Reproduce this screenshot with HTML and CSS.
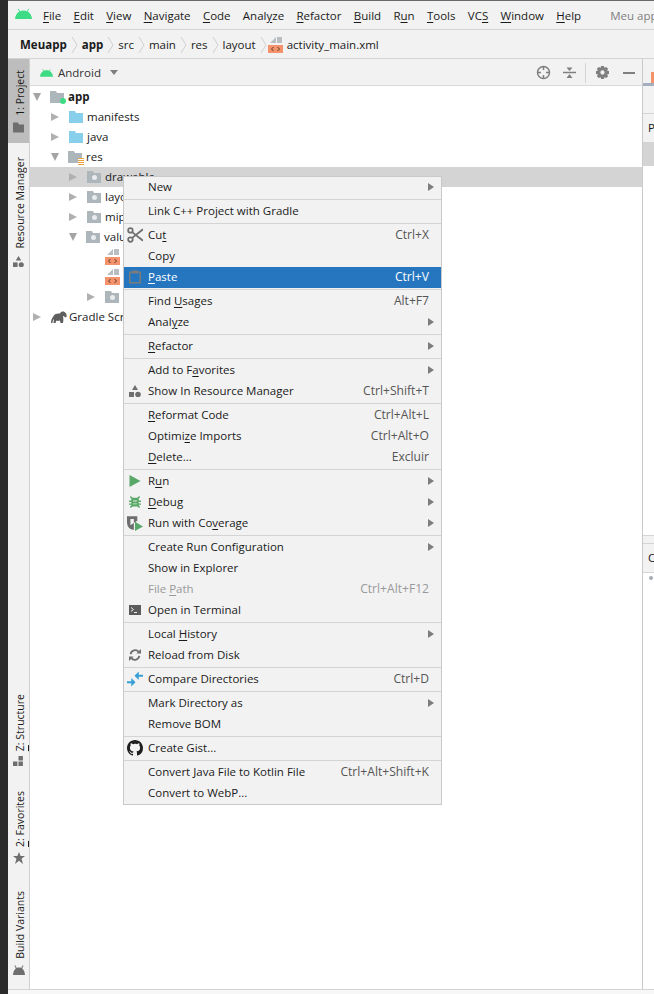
FILE: index.html
```html
<!DOCTYPE html>
<html lang="en">
<head>
<meta charset="utf-8">
<title>Meu app</title>
<link rel="stylesheet" href="styles.css">
</head>
<body>
<svg class="defs" width="0" height="0">
  <defs>
    <symbol id="android" viewBox="0 0 17 11"><path d="M0 11C.3 7.6 2 5 4.3 3.6L2.9 1.2 3.6.8 5 3.2C6.1 2.7 7.2 2.5 8.5 2.5s2.4.2 3.5.7L13.4.8l.7.4-1.4 2.4C15 5 16.700 7.600 17 11Z"/></symbol>
    <symbol id="folder" viewBox="0 0 14 12"><path d="M0 0H6L7 2H14V12H0Z"/></symbol>
    <symbol id="chev" viewBox="0 0 7 18"><path d="M1 1 6 9 1 17" fill="none" stroke="#d0d0d0"/></symbol>
    <symbol id="xml" viewBox="0 0 15 16"><path d="M8 0V6H2Z M9 0H14V6H9Z" fill="#b9bec2"/><rect y="8" width="15" height="8" fill="#f4936b"/><path d="M5.500 10 3.500 12 5.500 14M9.500 10 11.500 12 9.500 14" fill="none" stroke="#5a3a2c"/></symbol>
    <symbol id="shapes" viewBox="0 0 12 12"><path d="M6 0 9 5H3Z"/><rect y="7" width="5" height="5"/><circle cx="9" cy="9.500" r="2.800"/></symbol>
  </defs>
</svg>
<div class="app">
  <div class="desktop-edge"></div>
  <div class="ide">
    <header class="menubar">
      <svg class="logo"><use href="#android"/></svg>
      <nav class="menus">
        <span class="m"><u>F</u>ile</span><span class="m"><u>E</u>dit</span><span class="m"><u>V</u>iew</span><span class="m"><u>N</u>avigate</span><span class="m"><u>C</u>ode</span><span class="m">Anal<u>y</u>ze</span><span class="m"><u>R</u>efactor</span><span class="m"><u>B</u>uild</span><span class="m">R<u>u</u>n</span><span class="m"><u>T</u>ools</span><span class="m">VC<u>S</u></span><span class="m"><u>W</u>indow</span><span class="m"><u>H</u>elp</span>
      </nav>
      <span class="wintitle">Meu app</span>
    </header>
    <div class="crumbs">
      <b>Meuapp</b><svg class="chev"><use href="#chev"/></svg>
      <b>app</b><svg class="chev"><use href="#chev"/></svg>
      <span>src</span><svg class="chev"><use href="#chev"/></svg>
      <span>main</span><svg class="chev"><use href="#chev"/></svg>
      <span>res</span><svg class="chev"><use href="#chev"/></svg>
      <span>layout</span><svg class="chev"><use href="#chev"/></svg>
      <svg class="xml crumb-xml"><use href="#xml"/></svg><span>activity_main.xml</span>
    </div>
    <div class="workspace">
      <aside class="sidebar">
        <div class="st-top">
          <div class="st active"><span class="vt">1: Project</span><svg class="st-ico" viewBox="0 0 11 10"><path d="M0 0H5L6 2H11V10H0Z"/></svg></div>
          <div class="st res-tab"><span class="vt">Resource Manager</span><svg class="st-ico"><use href="#shapes"/></svg></div>
        </div>
        <div class="st-bottom">
          <div class="st"><span class="vt"><u>Z</u>: Structure</span><svg class="st-ico" viewBox="0 0 10 10"><path d="M0 5H4V9H0ZM5 0H9V4H5ZM5 5H9V9H5Z"/></svg></div>
          <div class="st"><span class="vt"><u>2</u>: Favorites</span><svg class="st-ico star" viewBox="0 0 12 12"><path d="M6 0 7.600 4H12L8.500 6.800 10 12 6 8.800 2 12 3.500 6.800 0 4H4.400Z"/></svg></div>
          <div class="st"><span class="vt">Build Variants</span><svg class="st-ico star" viewBox="0 0 12 10"><path d="M0 10C.2 7 1 5 2.800 3.500L1.500.5 2.200.2 3.800 3C4.500 2.600 5.200 2.500 6 2.500s1.500.1 2.200.5L9.800.2l.7.3-1.300 3C11 5 11.800 7 12 10Z"/></svg></div>
        </div>
      </aside>
      <main class="project">
        <div class="toolhead">
          <svg class="tool-android"><use href="#android"/></svg>
          <span class="tool-title">Android</span>
          <i class="drop"></i>
          <div class="tool-actions">
            <svg class="ta" viewBox="0 0 15 15"><circle cx="7.500" cy="7.500" r="6" fill="none" stroke="#7f7f7f" stroke-width="1.500"/><path d="M7.500 1V5M7.500 10V14M1 7.500H5M10 7.500H14" stroke="#7f7f7f" stroke-width="1.500"/></svg>
            <svg class="ta" viewBox="0 0 13 13"><path d="M0 6.500H13" stroke="#7f7f7f" stroke-width="1.500"/><path d="M6.500 5 3.500 1.500H9.500ZM6.500 8 3.500 12H9.500Z" fill="#7f7f7f"/></svg>
            <i class="ta-sep"></i>
            <svg class="ta gear" viewBox="0 0 14 14"><path fill="#7f7f7f" fill-rule="evenodd" d="M5.500 0H8.500L9 2 11 1 13 3 12 5 14 5.500V8.500L12 9 13 11 11 13 9 12 8.500 14H5.500L5 12 3 13 1 11 2 9 0 8.500V5.500L2 5 1 3 3 1 5 2ZM7 4.700A2.300 2.300 0 1 0 7 9.300 2.300 2.300 0 1 0 7 4.700Z"/></svg>
            <i class="minimize"></i>
          </div>
        </div>
        <div class="tree">
          <div class="row l0 bold"><i class="arr down"></i><span class="fico"><svg class="fold grey"><use href="#folder"/></svg><i class="dot"></i></span><span>app</span></div>
          <div class="row l1"><i class="arr"></i><svg class="fold blue"><use href="#folder"/></svg><span>manifests</span></div>
          <div class="row l1"><i class="arr"></i><svg class="fold blue"><use href="#folder"/></svg><span>java</span></div>
          <div class="row l1"><i class="arr down"></i><span class="fico"><svg class="fold grey"><use href="#folder"/></svg><i class="lines"></i></span><span>res</span></div>
          <div class="row l2 selected"><i class="arr"></i><span class="fico"><svg class="fold grey"><use href="#folder"/></svg><i class="hole"></i></span><span>drawable</span></div>
          <div class="row l2"><i class="arr"></i><span class="fico"><svg class="fold grey"><use href="#folder"/></svg><i class="hole"></i></span><span>layout</span></div>
          <div class="row l2"><i class="arr"></i><span class="fico"><svg class="fold grey"><use href="#folder"/></svg><i class="hole"></i></span><span>mipmap</span></div>
          <div class="row l2"><i class="arr down"></i><span class="fico"><svg class="fold grey"><use href="#folder"/></svg><i class="hole"></i></span><span>values</span></div>
          <div class="row l3"><svg class="xml"><use href="#xml"/></svg><span>colors.xml</span></div>
          <div class="row l3"><svg class="xml"><use href="#xml"/></svg><span>styles.xml</span></div>
          <div class="row l3b"><i class="arr"></i><span class="fico"><svg class="fold grey"><use href="#folder"/></svg><i class="hole"></i></span><span>xml</span></div>
          <div class="row l0"><i class="arr"></i><svg class="gradle" viewBox="0 0 16 12"><path d="M0 12C0 9 1 7 2 6 3 3 6 2 9 2.500 10 .5 12 0 13.500 1 15.500 2 16 4 15.500 6L14 6.500C13.500 5.500 13 5 12 5 12.500 7 12.500 9 12 12H9.500L9 9.500C7.500 10 6.500 10 5.500 9.500L4.500 12H2.500L3 8C2 9 1.500 10 1.500 12Z" fill="#5e5e5e"/></svg><span>Gradle Scripts</span></div>
        </div>
      </main>
      <aside class="rightpanel">
        <div class="rp-tab"><i class="rp-mark"></i></div>
        <div class="rp-band"></div>
        <div class="rp-head">P</div>
        <div class="rp-selected"></div>
        <div class="rp-blank"></div>
        <div class="rp-thin"></div>
        <div class="rp-head2">C</div>
        <div class="rp-list"><i class="rp-dot"></i></div>
      </aside>
    </div>
    <footer class="statusbar"></footer>
  </div>
</div>

<div class="ctx">
  <div class="it sub"><span class="lbl">New</span></div>
  <hr>
  <div class="it"><span class="lbl">Link C++ Project with Gradle</span></div>
  <hr>
  <div class="it"><svg class="ic ic-lg" viewBox="0 0 14 14"><g fill="none" stroke="#6e6e6e" stroke-width="1.500"><circle cx="3" cy="3" r="2"/><circle cx="3" cy="11" r="2"/><path d="M4.500 4.500 14 12M4.500 9.500 14 2"/></g></svg><span class="lbl">Cu<u>t</u></span><span class="sc">Ctrl+X</span></div>
  <div class="it"><span class="lbl">Copy</span></div>
  <div class="it hl"><svg class="ic ic-tall" viewBox="0 0 12 14"><path d="M.8 2.800H11.200V13.200H.8Z" fill="none" stroke="#7c7c7c" stroke-width="1.500"/><rect x="3" y="1" width="6" height="3" fill="#7c7c7c"/></svg><span class="lbl"><u>P</u>aste</span><span class="sc">Ctrl+V</span></div>
  <hr>
  <div class="it"><span class="lbl">Find <u>U</u>sages</span><span class="sc">Alt+F7</span></div>
  <div class="it sub"><span class="lbl">Anal<u>y</u>ze</span></div>
  <hr>
  <div class="it sub"><span class="lbl"><u>R</u>efactor</span></div>
  <hr>
  <div class="it sub"><span class="lbl">Add to F<u>a</u>vorites</span></div>
  <div class="it"><svg class="ic" viewBox="0 0 12 12"><use href="#shapes"/></svg><span class="lbl">Show In Resource Manager</span><span class="sc">Ctrl+Shift+T</span></div>
  <hr>
  <div class="it"><span class="lbl"><u>R</u>eformat Code</span><span class="sc">Ctrl+Alt+L</span></div>
  <div class="it"><span class="lbl">Optimi<u>z</u>e Imports</span><span class="sc">Ctrl+Alt+O</span></div>
  <div class="it"><span class="lbl"><u>D</u>elete...</span><span class="sc">Excluir</span></div>
  <hr>
  <div class="it sub"><svg class="ic" viewBox="0 0 11 12"><path d="M0 0 11 6 0 12Z" fill="#59a869"/></svg><span class="lbl">R<u>u</u>n</span></div>
  <div class="it sub"><svg class="ic" viewBox="0 0 13 13"><path d="M2 0 4 2H9L11 0 12 1 10.500 3V5H13V6.500H10.500V8H13V9.500H10.500V10L12 12 11 13 9 11.500H4L2 13 1 12 2.500 10V9.500H0V8H2.500V6.500H0V5H2.500V3L1 1Z" fill="#59a869"/><path d="M4.500 5H8.500V6H4.500ZM4.500 8H8.500V9H4.500Z" fill="#e8f2ea"/></svg><span class="lbl"><u>D</u>ebug</span></div>
  <div class="it sub"><svg class="ic ic-lg" viewBox="0 0 14 14"><path d="M0 1H9V5L6 7V13C3 13 0 11 0 6Z" fill="#6e6e6e"/><path d="M3 3.500H6V7L3 9Z" fill="#f2f2f2"/><path d="M7 6 14 10 7 14Z" fill="#59a869"/></svg><span class="lbl">Run with Co<u>v</u>erage</span></div>
  <hr>
  <div class="it sub"><span class="lbl">Create Run Configuration</span></div>
  <div class="it"><span class="lbl">Show in Explorer</span></div>
  <div class="it dis"><span class="lbl">File <u>P</u>ath</span><span class="sc">Ctrl+Alt+F12</span></div>
  <div class="it"><svg class="ic" viewBox="0 0 12 10"><rect width="12" height="10" fill="#5c5c5c"/><path d="M2 2.500 4.500 4.500 2 6.500M5 7.500H8" fill="none" stroke="#eee"/></svg><span class="lbl">Open in Terminal</span></div>
  <hr>
  <div class="it sub"><span class="lbl">Local <u>H</u>istory</span></div>
  <div class="it"><svg class="ic" viewBox="0 0 13 13"><path d="M1.800 5.500A5 5 0 0 1 10.500 3M11.200 7.500A5 5 0 0 1 2.500 10" fill="none" stroke="#6e6e6e" stroke-width="2"/><path d="M8 5 13 5 13 0ZM5 8H0V13Z" fill="#6e6e6e"/></svg><span class="lbl">Reload from Disk</span></div>
  <hr>
  <div class="it"><svg class="ic ic-lg" viewBox="0 0 15 14"><path d="M0 9H4V6L8 10 4 14V11H0Z" fill="#389fd6"/><path d="M15 3H11V0L7 4 11 8V5H15Z" fill="#389fd6"/></svg><span class="lbl">Compare Directories</span><span class="sc">Ctrl+D</span></div>
  <hr>
  <div class="it sub"><span class="lbl">Mark Directory as</span></div>
  <div class="it"><span class="lbl">Remove BOM</span></div>
  <hr>
  <div class="it"><svg class="ic ic-lg" viewBox="0 0 16 16"><path fill="#1f1f1f" d="M8 0C3.580 0 0 3.580 0 8c0 3.540 2.290 6.530 5.470 7.590.4.070.55-.170.55-.380v-1.340c-2.230.480-2.700-1.070-2.700-1.070-.360-.920-.890-1.170-.890-1.170-.730-.500.050-.490.050-.490.800.060 1.230.830 1.230.830.710 1.220 1.870.870 2.330.660.070-.520.280-.870.510-1.070-1.780-.200-3.640-.890-3.640-3.950 0-.870.310-1.590.820-2.150-.080-.200-.360-1.020.080-2.120 0 0 .670-.210 2.200.820A7.600 7.600 0 0 1 8 3.870c.680 0 1.360.090 2 .270 1.530-1.040 2.200-.820 2.200-.820.440 1.100.160 1.920.080 2.120.510.560.820 1.270.820 2.150 0 3.070-1.870 3.750-3.650 3.950.290.250.540.730.540 1.480v2.190c0 .210.150.460.550.380A8.010 8.010 0 0 0 16 8c0-4.420-3.580-8-8-8Z"/></svg><span class="lbl">Create Gist...</span></div>
  <hr>
  <div class="it"><span class="lbl">Convert Java File to Kotlin File</span><span class="sc">Ctrl+Alt+Shift+K</span></div>
  <div class="it"><span class="lbl">Convert to WebP...</span></div>
</div>
</body>
</html>
```
FILE: styles.css
```css
* { box-sizing: border-box; }
html, body { margin: 0; padding: 0; height: 994px; width: 654px; overflow: hidden; background: #fff; }
body { font: 11.5px/16px "Open Sans", "Noto Sans", sans-serif; color: #1a1a1a; position: relative; }
u { text-underline-offset: 2px; text-decoration-thickness: 1px; }
.defs { position: absolute; }
.app { display: flex; height: 994px; }
.desktop-edge { width: 8px; flex: none; background: #2b2b2b; }
.ide { flex: 1; min-width: 0; display: flex; flex-direction: column; border-top: 1px solid #6a6a6a; }
.menubar { height: 29px; flex: none; display: flex; align-items: center; background: #f2f2f2; border-bottom: 1px solid #d4d4d4; padding: 1px 0 0 7px; white-space: nowrap; overflow: hidden; }
.logo { width: 17px; height: 11px; fill: #3ddc84; margin-top: -5px; flex: none; }
.menus { display: flex; margin-left: 11px; gap: 12.3px; }
.wintitle { margin-left: 29px; color: #7f7f7f; }
.crumbs { height: 29px; flex: none; display: flex; align-items: center; background: #f2f2f2; border-bottom: 1px solid #d4d4d4; padding: 1px 0 0 12px; white-space: nowrap; }
.crumbs b { font-weight: 700; }
.chev { width: 7px; height: 18px; margin: 0 4px; flex: none; }
.crumb-xml { margin: 0 4px 0 -3px; }
.xml { width: 15px; height: 16px; flex: none; }
.workspace { flex: 1; min-height: 0; display: flex; }
.sidebar { width: 22px; flex: none; background: #f2f2f2; border-right: 1px solid #d0d0d0; display: flex; flex-direction: column; justify-content: space-between; font-size: 10.5px; }
.st { display: flex; flex-direction: column; align-items: center; }
.st.active { background: #bdbdbd; height: 84px; padding-top: 11px; gap: 3px; }
.res-tab { margin-top: 14px; gap: 2px; }
.st-bottom { display: flex; flex-direction: column; gap: 27px; padding-bottom: 13px; }
.st-bottom .st:first-child { margin-bottom: -3px; }
.vt { writing-mode: vertical-rl; transform: rotate(180deg); line-height: 20px; white-space: nowrap; width: 20px; padding-right: 1px; }
.st-ico { width: 11px; height: 11px; fill: #6e6e6e; flex: none; margin-top: 5px; }
.st.active .st-ico { margin-top: 3px; }
.star { width: 12px; height: 12px; }
.project { flex: 1; min-width: 0; display: flex; flex-direction: column; background: #fff; }
.toolhead { height: 27px; flex: none; display: flex; align-items: center; background: #f2f2f2; border-bottom: 1px solid #d9d9d9; padding: 1px 0 0 10px; }
.tool-android { width: 13px; height: 9px; fill: #3ddc84; flex: none; }
.tool-title { margin-left: 5px; color: #333; }
.drop { width: 0; height: 0; margin-left: 9px; border: 4.5px solid transparent; border-top: 5px solid #7f7f7f; border-bottom: 0; }
.tool-actions { margin-left: auto; display: flex; align-items: center; padding-right: 7px; }
.ta { width: 15px; height: 15px; flex: none; }
.ta + .ta { margin-left: 12px; width: 13px; }
.ta-sep { width: 1px; height: 20px; background: #d4d4d4; margin: 0 10px 0 9px; }
.gear { width: 13px; height: 13px; }
.minimize { width: 12px; height: 2px; background: #7f7f7f; margin-left: 14px; }
.tree { padding-top: 1px; }
.row { height: 20px; display: flex; align-items: center; white-space: nowrap; }
.row.bold { font-weight: 700; }
.row.l0 { padding-left: 3px; }
.row.l1 { padding-left: 21px; }
.row.l2 { padding-left: 39px; }
.row.l3 { padding-left: 75px; gap: 3px; }
.row.l3b { padding-left: 57px; }
.row.selected { background: #d4d4d4; }
.arr { width: 0; height: 0; flex: none; margin-right: 10px; border: 4.5px solid transparent; border-left: 8px solid #b0b0b0; border-right: 0; }
.arr.down { border: 4.5px solid transparent; border-top: 8px solid #a4a4a4; border-bottom: 0; margin-right: 9px; }
.fold { width: 14px; height: 12px; flex: none; display: block; }
.fold.blue { fill: #87cfea; margin-right: 4px; }
.fold.grey { fill: #adb6bb; }
.fico { position: relative; width: 14px; height: 12px; margin-right: 4px; flex: none; }
.dot { position: absolute; right: -2px; bottom: -1px; width: 6px; height: 6px; border-radius: 50%; background: #3ddc84; }
.lines { position: absolute; right: -2px; bottom: -3px; width: 6px; height: 8px; background: repeating-linear-gradient(#e8a33d 0 1px, #fff 1px 2px); }
.hole { position: absolute; left: 5px; top: 4px; width: 5px; height: 5px; border-radius: 50%; background: #e8ecee; }
.gradle { width: 16px; height: 12px; flex: none; margin-right: 2px; }
.rightpanel { width: 12px; flex: none; border-left: 1px solid #c9c9c9; display: flex; flex-direction: column; background: #fff; overflow: hidden; }
.rp-tab { height: 27px; flex: none; background: #f2f2f2; border-bottom: 3px solid #a3afbf; position: relative; }
.rp-mark { position: absolute; left: 8px; top: 13px; width: 3px; height: 11px; background: #f4936b; }
.rp-band { height: 28px; flex: none; background: #f2f2f2; border-bottom: 1px solid #d4d4d4; }
.rp-head { height: 28px; flex: none; background: #f2f2f2; line-height: 28px; padding-left: 5px; }
.rp-selected { height: 24px; flex: none; background: #d4d4d4; }
.rp-blank { height: 370px; flex: none; background: #fff; border-bottom: 1px solid #d4d4d4; }
.rp-thin { height: 8px; flex: none; background: #f2f2f2; border-bottom: 1px solid #d4d4d4; }
.rp-head2 { height: 29px; flex: none; background: #f2f2f2; border-bottom: 1px solid #d4d4d4; line-height: 28px; padding-left: 5px; }
.rp-list { flex: 1; position: relative; }
.rp-dot { position: absolute; left: 6px; top: 3px; width: 4px; height: 4px; border-radius: 50%; background: #a8adb5; }
.statusbar { height: 5px; flex: none; background: #f7f7f7; border-top: 1px solid #d4d4d4; }
.ctx { position: absolute; left: 123px; top: 176px; width: 319px; height: 629px; padding-bottom: 0; background: #f2f2f2; border: 1px solid #c9c9c9; }
.ctx hr { margin: 1px 0; height: 1px; border: 0; background: #d4d4d4; }
.it { height: 21px; display: flex; align-items: center; position: relative; padding: 0 12px 1px 24px; white-space: nowrap; }
.lbl { flex: 1; }
.sc { color: #555; font-size: 12.1px; }
.it.sub::after { content: ""; position: absolute; right: 7px; top: 6px; border: 4px solid transparent; border-left: 6px solid #7d7d7d; border-right: 0; }
.it.hl { background: #2675bf; color: #fff; }
.it.hl .sc { color: #fff; }
.it.dis, .it.dis .sc { color: #999; }
.ic { position: absolute; left: 5px; top: 4px; width: 12px; height: 12px; fill: #6e6e6e; }
.ic-lg { left: 3px; top: 2px; width: 16px; height: 16px; }
.ic-tall { left: 5px; top: 2px; width: 12px; height: 15px; }
```
